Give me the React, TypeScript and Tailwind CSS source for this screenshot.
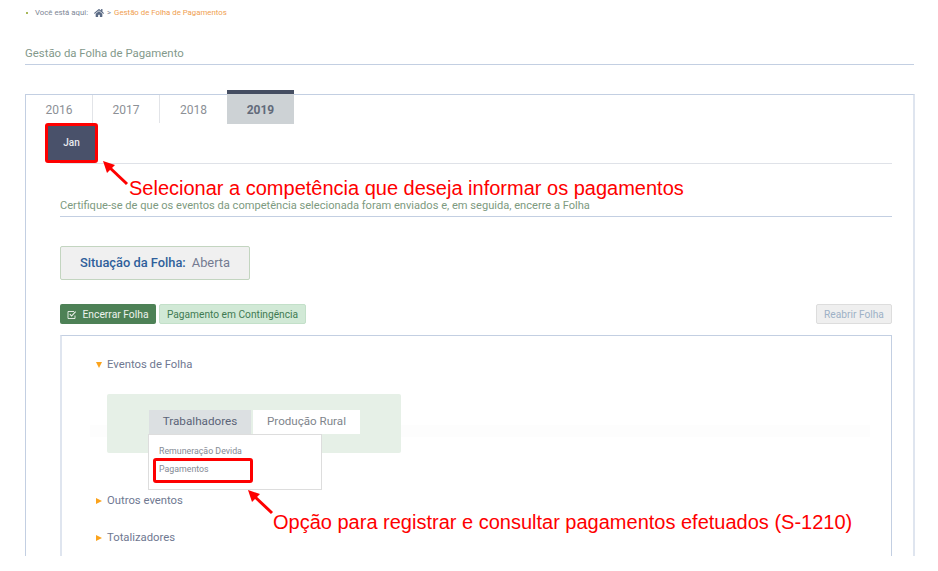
import { FaHome } from "react-icons/fa";

const roboto = { fontFamily: "Roboto, sans-serif" };
const years = ["2016", "2017", "2018"];

function RedArrow({ className }: { className: string }) {
  return (
    <svg className={className} width="28" height="28" viewBox="0 0 28 28" fill="none">
      <path d="M25 24 L6 6" stroke="#fe0000" strokeWidth="3" />
      <path d="M1 1 L13 5 L5 13 Z" fill="#fe0000" />
    </svg>
  );
}

function CheckSquare() {
  return (
    <svg width="10" height="10" viewBox="0 0 10 10" fill="none" stroke="currentColor">
      <path d="M8 5.5 V8.5 H1 V1.5 H7" strokeWidth="0.9" />
      <path d="M2.8 4.2 L4.6 6 L8.6 1.6" strokeWidth="1.1" />
    </svg>
  );
}

function TreeItem({ label, open }: { label: string; open?: boolean }) {
  return (
    <div className="flex items-center h-4 text-[11.3px] text-[#6f7891]">
      <span
        className={
          open
            ? "ml-px mr-[5px] w-0 h-0 border-x-[3.5px] border-x-transparent border-t-[6px] border-t-[#fba31c]"
            : "ml-px mr-[5px] w-0 h-0 border-y-[3.5px] border-y-transparent border-l-[6px] border-l-[#fba31c]"
        }
      />
      {label}
    </div>
  );
}

export default function App() {
  return (
    <div className="relative w-[938px] h-[571px] overflow-hidden bg-white pl-[25px] pr-[24px]" style={roboto}>
      {/* breadcrumb */}
      <div className="flex items-center h-[26px] text-[7.8px] text-[#7d8695]">
        <span className="w-[2px] h-[2px] bg-[#a8b85a] ml-px mr-[7px]" />
        <span>Você está aqui:</span>
        <FaHome className="ml-[6px] text-[10px] text-[#5b6b85]" />
        <span className="mx-[3px]">&gt;</span>
        <span className="text-[#f0a050]">Gestão de Folha de Pagamentos</span>
      </div>

      <div className="mt-[19px] h-[20px] border-b border-[#c3cfe2] text-[11.4px] leading-[17px] text-[#83998b]">
        Gestão da Folha de Pagamento
      </div>

      {/* panel */}
      <div className="mt-[29px] -mr-px h-[462px] border border-b-0 border-[#c3cfe2] border-r-2 border-r-[#dfe5ef] pr-[21px]">
        <div className="flex h-[28px]">
          {years.map((y, i) => (
            <div
              key={y}
              className={
                i < 2
                  ? "w-[67px] pt-[2px] flex items-center justify-center border-r border-[#e2e4e8] text-[12px] text-[#8c9096]"
                  : "w-[67px] pt-[2px] flex items-center justify-center text-[12px] text-[#8c9096]"
              }
            >
              {y}
            </div>
          ))}
          <div className="w-[67px] -mt-[5px] h-[34px] pt-px flex items-center justify-center border-t-[4px] border-[#454e62] bg-[#cdd2d5] text-[12px] font-bold text-[#626a7a]">
            2019
          </div>
        </div>

        <div className="pl-[19px]">
          <div className="w-[53px] h-[40px] pb-px flex items-center justify-center rounded-[3px] border-[3px] border-[#fe0000] bg-[#49516a] text-[10px] font-medium text-[#e8e9ee]">
            Jan
          </div>
        </div>

        <div className="ml-[34px]">
          <div className="border-t border-[#dfe2e8]" />
          <div className="mt-[36px] h-[17px] border-b border-[#c3cfe2] text-[11.1px] leading-[12px] text-[#7d9a80]">
            Certifique-se de que os eventos da competência selecionada foram enviados e, em seguida, encerre a Folha
          </div>

          <div className="mt-[29px] w-[190px] h-[34px] flex items-center justify-center gap-[6px] rounded-[2px] border border-[#c3d5c0] bg-[#f0f0f0] text-[12.85px]">
            <span className="font-medium text-[#2f5f9b]">Situação da Folha:</span>
            <span className="text-[#747b90]">Aberta</span>
          </div>

          <div className="mt-[24px] flex h-[20px] gap-[3px]">
            <div className="w-[96px] pt-px flex items-center justify-center gap-[5px] rounded-[2px] bg-[#4d8156] text-[10.3px] text-[#eef3ee]">
              <CheckSquare />
              Encerrar Folha
            </div>
            <div className="w-[147px] pt-px flex items-center justify-center rounded-[2px] border border-[#c3e0c9] bg-[#d1e9d6] text-[10.2px] text-[#3f7a52]">
              Pagamento em Contingência
            </div>
            <div className="ml-auto w-[76px] pt-px flex items-center justify-center rounded-[2px] border border-[#dddddd] bg-[#efefef] text-[10.2px] text-[#9db1c6]">
              Reabrir Folha
            </div>
          </div>

          {/* inner box */}
          <div className="relative mt-[11px] h-[221px] border border-b-0 border-[#c3cfe2] border-l-2 border-l-[#dfe5ef] pl-[33px] pt-[21px]">
            <div className="absolute left-[28px] right-[21px] top-[89px] h-[12px] bg-[#fdfdfd]" />
            <div className="relative">
              <TreeItem label="Eventos de Folha" open />
            </div>

            <div className="relative mt-[21px] ml-[12px] w-[294px] h-[59px] rounded-[2px] bg-[#e6f0e7] pl-[42px] pt-[16px]">
              <div className="flex h-[24px] gap-[2px]">
                <div className="w-[102px] flex items-center justify-center bg-[#dce0e2] text-[11.7px] text-[#5b6478]">
                  Trabalhadores
                </div>
                <div className="w-[107px] flex items-center justify-center bg-white text-[11.6px] text-[#80858c]">
                  Produção Rural
                </div>
              </div>
              {/* dropdown over the band */}
              <div className="absolute left-[41px] top-[40px] w-[174px] h-[56px] border border-[#dddddd] bg-white pl-[10px] pt-[7px] text-[8.8px] leading-[18px] text-[#858b95]">
                <div>Remuneração Devida</div>
                <div>Pagamentos</div>
              </div>
            </div>

            <div className="relative mt-[40px]">
              <TreeItem label="Outros eventos" />
            </div>
            <div className="mt-[21px]">
              <TreeItem label="Totalizadores" />
            </div>
          </div>
        </div>
      </div>

      {/* annotations lie over the page */}
      <div className="absolute left-[153px] top-[458px] w-[100px] h-[25px] rounded-[3px] border-[3px] border-[#fe0000]" />
      <RedArrow className="absolute left-[102px] top-[160px]" />
      <RedArrow className="absolute left-[247px] top-[489px]" />
      <div
        className="absolute left-[129px] top-[176px] whitespace-nowrap text-[20px] leading-[24px] text-[#fe0000]"
        style={{ fontFamily: '"Liberation Sans", sans-serif' }}
      >
        Selecionar a competência que deseja informar os pagamentos
      </div>
      <div
        className="absolute left-[273px] top-[510px] whitespace-nowrap text-[20px] leading-[24px] text-[#fe0000]"
        style={{ fontFamily: '"Liberation Sans", sans-serif' }}
      >
        Opção para registrar e consultar pagamentos efetuados (S-1210)
      </div>
    </div>
  );
}
